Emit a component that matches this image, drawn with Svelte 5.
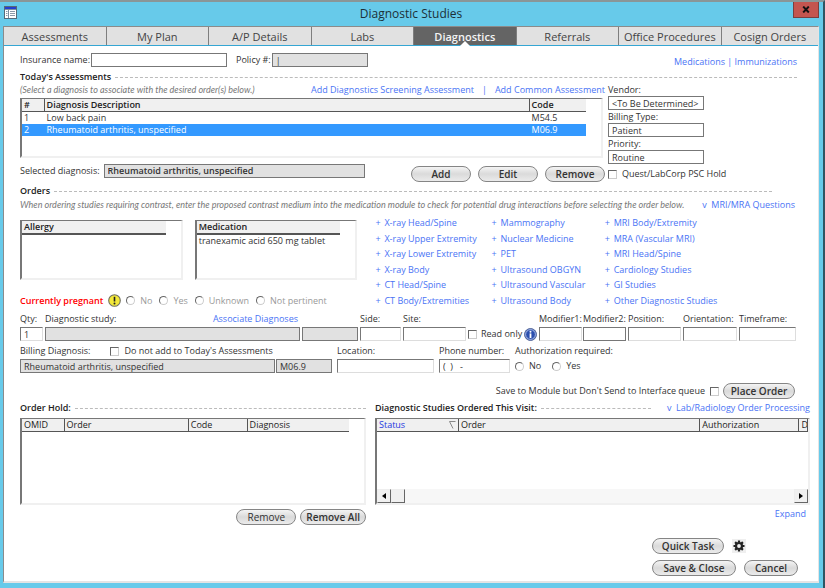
<script>
  const tabs = ['Assessments', 'My Plan', 'A/P Details', 'Labs', 'Diagnostics', 'Referrals', 'Office Procedures', 'Cosign Orders'];
  const diagnoses = [
    { n: 1, text: 'Low back pain', code: 'M54.5' },
    { n: 2, text: 'Rheumatoid arthritis, unspecified', code: 'M06.9' }
  ];
  let selected = $state(2);
  const studies = [
    ['X-ray Head/Spine', 'Mammography', 'MRI Body/Extremity'],
    ['X-ray Upper Extremity', 'Nuclear Medicine', 'MRA (Vascular MRI)'],
    ['X-ray Lower Extremity', 'PET', 'MRI Head/Spine'],
    ['X-ray Body', 'Ultrasound OBGYN', 'Cardiology Studies'],
    ['CT Head/Spine', 'Ultrasound Vascular', 'GI Studies'],
    ['CT Body/Extremities', 'Ultrasound Body', 'Other Diagnostic Studies']
  ];
</script>

<div class="screen">
  <div class="window">
    <header class="titlebar">
      <svg class="app-icon" width="13" height="13" viewBox="0 0 13 13" aria-hidden="true">
        <rect x="0.5" y="0.5" width="12" height="12" fill="#fff" stroke="#566a78" />
        <rect x="1" y="1" width="11" height="2" fill="#2340d0" />
        <path d="M1 3.5h11M4.500 3v9" stroke="#7b8ea0" />
        <path d="M2 5.500h1.500M2 7.500h1.500M2 9.500h1.500M6 5.500h5M6 7.500h5M6 9.500h5" stroke="#8b99a8" />
      </svg>
      <h1>Diagnostic Studies</h1>
      <button class="close" aria-label="Close">
        <svg width="8" height="7" viewBox="0 0 8 7" aria-hidden="true"><path d="M1.200 0.500l5.600 6M6.800 0.500l-5.600 6" stroke="#111" stroke-width="1.900" /></svg>
      </button>
    </header>

    <div class="frame">
      <nav class="tabs">
        {#each tabs as tab}
          <button class="tab" class:active={tab === 'Diagnostics'}>{tab}</button>
        {/each}
      </nav>

      <main>
        <div class="insurance">
          <label for="ins">Insurance name:</label>
          <input id="ins" class="box ins" type="text" />
          <label for="policy">Policy #:</label>
          <input id="policy" class="box gray policy" type="text" value="|" />
          <span class="top-links"><a href="#medications">Medications</a> | <a href="#immunizations">Immunizations</a></span>
        </div>

        <h2 class="rule first">Today's Assessments</h2>
        <div class="assess">
          <div class="assess-left">
            <div class="hint-row">
              <em>(Select a diagnosis to associate with the desired order(s) below.)</em>
              <span class="add-links">
                <a href="#screening">Add Diagnostics Screening Assessment</a>
                <span>|</span>
                <a href="#common">Add Common Assessment</a>
              </span>
            </div>
            <div class="sunken short diag">
              <table>
                <colgroup><col style="width:4%" /><col style="width:86%" /><col style="width:10%" /></colgroup>
                <thead><tr><th>#</th><th>Diagnosis Description</th><th>Code</th></tr></thead>
                <tbody>
                  {#each diagnoses as d}
                    <tr class:selected={selected === d.n} onclick={() => (selected = d.n)}>
                      <td>{d.n}</td><td>{d.text}</td><td>{d.code}</td>
                    </tr>
                  {/each}
                </tbody>
              </table>
            </div>
            <div class="selected-row">
              <div class="selected-field">
                <label for="seldx">Selected diagnosis:</label>
                <input id="seldx" class="box gray strong" type="text" readonly value="Rheumatoid arthritis, unspecified" />
              </div>
              <div class="pills">
                <button class="pill">Add</button>
                <button class="pill">Edit</button>
                <button class="pill">Remove</button>
              </div>
            </div>
          </div>
          <div class="assess-right">
            <div class="stack"><label for="vendor">Vendor:</label><input id="vendor" class="box" type="text" value="<To Be Determined>" /></div>
            <div class="stack"><label for="billtype">Billing Type:</label><input id="billtype" class="box" type="text" value="Patient" /></div>
            <div class="stack"><label for="priority">Priority:</label><input id="priority" class="box" type="text" value="Routine" /></div>
            <label class="tick psc"><input type="checkbox" />Quest/LabCorp PSC Hold</label>
          </div>
        </div>

        <h2 class="rule second">Orders</h2>
        <div class="contrast">
          <em>When ordering studies requiring contrast, enter the proposed contrast medium into the medication module to check for potential drug interactions before selecting the order below.</em>
          <a href="#mri"><span class="mark">v</span>MRI/MRA Questions</a>
        </div>

        <div class="orders">
          <div class="orders-left">
            <div class="lists">
              <div class="sunken short plain">
                <table><thead><tr><th>Allergy</th></tr></thead></table>
              </div>
              <div class="sunken short plain">
                <table>
                  <thead><tr><th>Medication</th></tr></thead>
                  <tbody><tr><td>tranexamic acid 650 mg tablet</td></tr></tbody>
                </table>
              </div>
            </div>
            <div class="pregnant" role="radiogroup" aria-label="Currently pregnant">
              <strong>Currently pregnant</strong>
              <svg width="13" height="13" viewBox="0 0 13 13" aria-hidden="true">
                <circle cx="6.500" cy="6.500" r="5.800" fill="#f3e93a" stroke="#6f6f62" stroke-width="1.100" />
                <path d="M6.500 2.800v4.700" stroke="#222" stroke-width="1.600" /><circle cx="6.500" cy="9.600" r="1" fill="#222" />
              </svg>
              <label><input type="radio" name="preg" disabled />No</label>
              <label><input type="radio" name="preg" disabled />Yes</label>
              <label><input type="radio" name="preg" disabled />Unknown</label>
              <label><input type="radio" name="preg" disabled />Not pertinent</label>
            </div>
          </div>
          <div class="studies">
            {#each studies as row}
              {#each row as study}
                <a href="#study"><span class="mark">+</span>{study}</a>
              {/each}
            {/each}
          </div>
        </div>

        <div class="fields">
          <div class="field"><label for="qty">Qty:</label><input id="qty" class="inset" type="text" value="1" /></div>
          <div class="field">
            <span class="split"><label for="study">Diagnostic study:</label><a href="#associate">Associate Diagnoses</a></span>
            <input id="study" class="box gray" type="text" readonly />
          </div>
          <div class="field"><input class="box gray" type="text" aria-label="Study code" readonly /></div>
          <div class="field"><label for="side">Side:</label><input id="side" class="inset" type="text" /></div>
          <div class="field"><label for="site">Site:</label><input id="site" class="inset" type="text" /></div>
          <div class="readonly">
            <label class="tick"><input type="checkbox" />Read only</label>
            <svg width="13" height="13" viewBox="0 0 13 13" aria-hidden="true">
              <circle cx="6.500" cy="6.500" r="6" fill="#2b4fae" stroke="#5a6c9c" />
              <circle cx="6.500" cy="6.500" r="4.900" fill="none" stroke="#c8d6f5" stroke-width="0.800" />
              <circle cx="6.500" cy="3.700" r="1" fill="#fff" /><path d="M6.500 5.400v4.600" stroke="#fff" stroke-width="1.800" />
            </svg>
          </div>
          <div class="field"><label for="mod1">Modifier1:</label><input id="mod1" class="inset" type="text" /></div>
          <div class="field"><label for="mod2">Modifier2:</label><input id="mod2" class="box" type="text" /></div>
          <div class="field"><label for="pos">Position:</label><input id="pos" class="inset" type="text" /></div>
          <div class="field"><label for="orient">Orientation:</label><input id="orient" class="inset" type="text" /></div>
          <div class="field"><label for="time">Timeframe:</label><input id="time" class="inset" type="text" /></div>
        </div>

        <div class="billing">
          <div class="field">
            <span class="bill-label">
              <label for="billdx">Billing Diagnosis:</label>
              <label class="tick"><input type="checkbox" />Do not add to Today's Assessments</label>
            </span>
            <span class="bill-inputs">
              <input id="billdx" class="box gray" type="text" readonly value="Rheumatoid arthritis, unspecified" />
              <input class="box gray" type="text" aria-label="Billing code" readonly value="M06.9" />
            </span>
          </div>
          <div class="field"><label for="loc">Location:</label><input id="loc" class="inset" type="text" /></div>
          <div class="field"><label for="phone">Phone number:</label><input id="phone" class="inset" type="text" value="(  )   -" /></div>
          <div class="field" role="radiogroup" aria-label="Authorization required">
            <span>Authorization required:</span>
            <span class="auth">
              <label><input type="radio" name="auth" />No</label>
              <label><input type="radio" name="auth" />Yes</label>
            </span>
          </div>
        </div>

        <div class="place">
          <label class="tick">Save to Module but Don't Send to Interface queue<input type="checkbox" /></label>
          <button class="pill">Place Order</button>
        </div>

        <div class="bottom">
          <section>
            <h2 class="rule">Order Hold:</h2>
            <div class="sunken short grid-table">
              <table>
                <colgroup><col style="width:13%" /><col style="width:38%" /><col style="width:18%" /><col style="width:31%" /></colgroup>
                <thead><tr><th>OMID</th><th>Order</th><th>Code</th><th>Diagnosis</th></tr></thead>
              </table>
            </div>
            <div class="hold-actions">
              <button class="pill soft">Remove</button>
              <button class="pill">Remove All</button>
            </div>
          </section>
          <section>
            <div class="visit-head">
              <h2 class="rule">Diagnostic Studies Ordered This Visit:</h2>
              <a href="#processing"><span class="mark">v</span>Lab/Radiology Order Processing</a>
            </div>
            <div class="sunken grid-table scrolls">
              <table>
                <colgroup><col style="width:19%" /><col style="width:56%" /><col style="width:23%" /><col style="width:2%" /></colgroup>
                <thead>
                  <tr>
                    <th><span class="sort">Status<svg width="7" height="8" viewBox="0 0 7 8" aria-hidden="true"><path d="M6.500 0.500h-6l3.500 7" fill="none" stroke="#888" /></svg></span></th>
                    <th>Order</th><th>Authorization</th><th>D</th>
                  </tr>
                </thead>
              </table>
              <div class="scrollbar">
                <button aria-label="Scroll left"><svg width="4" height="6" viewBox="0 0 4 6"><path d="M4 0v6L0 3z" /></svg></button>
                <span class="thumb"></span>
                <button class="right" aria-label="Scroll right"><svg width="4" height="6" viewBox="0 0 4 6"><path d="M0 0v6L4 3z" /></svg></button>
              </div>
            </div>
            <div class="expand"><a href="#expand">Expand</a></div>
          </section>
        </div>

        <div class="footer">
          <div>
            <button class="pill wide">Quick Task</button>
            <button class="gear" aria-label="Settings">
              <svg width="12" height="12" viewBox="-6 -6 12 12" aria-hidden="true">
                <circle r="3" fill="none" stroke="#222" stroke-width="2.200" />
                <g stroke="#222" stroke-width="2.200">
                  <path d="M0 -3.500v-2M0 3.500v2M-3.500 0h-2M3.500 0h2" />
                  <path d="M2.500 -2.500l1.400 -1.400M-2.500 2.500l-1.400 1.400M-2.500 -2.500l-1.400 -1.400M2.500 2.500l1.400 1.400" />
                </g>
              </svg>
            </button>
          </div>
          <div>
            <button class="pill save">Save &amp; Close</button>
            <button class="pill cancel">Cancel</button>
          </div>
        </div>
      </main>
    </div>
  </div>
</div>

<style>
  :global(body) { margin: 0; background: #67caea; }
  * { box-sizing: border-box; }
  .screen {
    font: 9px/12px "Open Sans", "Noto Sans", sans-serif;
    color: #333;
    border-top: 2px solid #8a9698;
    border-right: 2px solid #2f5563;
    background: #67caea;
    min-height: 100vh;
  }
  button, input { font: inherit; color: inherit; margin: 0; padding: 0; }
  a { color: #4a74f5; text-decoration: none; white-space: nowrap; }
  label, span { white-space: nowrap; }
  .window { padding: 0 4px 5px 3px; }

  .titlebar { display: grid; grid-template-columns: 1fr auto 1fr; height: 24px; }
  .app-icon { margin: 4px 0 0 1px; }
  h1 { margin: 0; font-size: 12px; line-height: 23px; font-weight: 400; color: #1c3038; }
  .close {
    justify-self: end; width: 26px; height: 16px;
    border: 1px solid #7a3f3f; border-top: 0; background: #c4554f;
    display: flex; align-items: center; justify-content: center;
  }

  .frame { background: #fff; border: 1px solid #8b8b8b; border-right-color: #e4e4e4; border-bottom: 2px solid #e4e4e4; }
  .tabs { display: flex; border-bottom: 1px solid #35a6d3; }
  .tab {
    flex: 1 1 0; min-width: 0; height: 18px; border: 0; border-right: 1px solid #7e7e7e;
    background: #e1e1e1; font-size: 11px; line-height: 17px; color: #444; position: relative; white-space: nowrap;
  }
  .tab:last-child { border-right: 0; flex-grow: 0.95; }
  .tab.active { background: #646464; color: #f4f4f4; font-weight: 600; }
  .tab.active::after {
    content: ""; position: absolute; left: 50%; bottom: -1px; margin-left: -5px;
    border: 5px solid transparent; border-top: 0; border-bottom-color: #fff;
  }

  main { padding: 7px 8px 5px 16px; }
  .box, .inset { height: 14px; width: 100%; min-width: 0; padding: 0 3px; background: #fff; border: 1px solid #777; border-radius: 0; outline: 0; }
  .inset { border-color: #777 #ddd #ddd #777; }
  .gray { background: #e1e1e1; }
  .strong { font-weight: 600; }

  .insurance { display: flex; align-items: center; }
  .ins { width: 136px; margin: 0 9px 0 1px; }
  .policy { width: 96px; margin-left: 1px; }
  .top-links { margin: 4px 13px 0 auto; color: #4a74f5; line-height: 10px; }

  h2 { margin: 0; font-size: 9px; line-height: 12px; font-weight: 600; color: #222; }
  .rule { display: flex; align-items: center; gap: 4px; white-space: nowrap; }
  .rule::after { content: ""; flex: 1; border-top: 1px dashed #bbb; }
  .first { margin: 4px 13px 1px 0; }
  .second { margin: 3px 38px 2px 0; }
  em { color: #777; font-family: Lato, "Open Sans", sans-serif; white-space: nowrap; }

  .assess { display: grid; grid-template-columns: minmax(0, 585fr) minmax(0, 202fr); gap: 3px; }
  .hint-row { display: flex; justify-content: space-between; margin-bottom: 2px; }
  .add-links { display: flex; gap: 8px; color: #4a74f5; }

  .sunken { border: 2px solid #f0f0f0; border-top: 1px solid #777; border-left-color: #777; background: #fff; overflow: hidden; }
  table { border-collapse: separate; border-spacing: 0; width: 100%; table-layout: fixed; }
  .short table { width: calc(100% - 15px); }
  th, td { padding: 0 2px; height: 12px; line-height: 12px; text-align: left; font-weight: 400; white-space: nowrap; overflow: hidden; }
  th { background: #f0f0f0; color: #222; border-bottom: 1px solid #555; border-right: 1px solid #555; font-weight: 600; }
  .short th:last-child { border-right: 0; }
  .diag { height: 60px; margin-right: 2px; }
  .selected td { background: #3399ff; color: #fff; }

  .selected-row { display: flex; justify-content: space-between; margin-top: 5px; height: 19px; }
  .selected-field { display: flex; align-items: center; gap: 4px; height: 15px; flex: 0 0 59%; }
  .selected-field .box { flex: 1; }
  .pills { display: flex; gap: 7px; align-items: end; }
  .pill {
    height: 16px; min-width: 60px; padding: 0 6px; border: 1px solid #858585; border-radius: 8px;
    background: linear-gradient(#f4f4f4, #dadada 50%, #ebebeb); font-size: 10px; line-height: 13px; font-weight: 600; color: #333; white-space: nowrap;
  }
  .soft { font-weight: 400; }
  .stack { width: 96px; margin-bottom: 1px; display: grid; }

  .tick { display: inline-flex; align-items: center; gap: 5px; }
  input[type="checkbox"] { appearance: none; width: 9px; height: 9px; border: 1px solid #ccc; border-top-color: #666; border-left-color: #666; background: #fff; }
  input[type="radio"] { appearance: none; width: 9px; height: 9px; border-radius: 50%; border: 1px solid #ccc; border-top-color: #666; border-left-color: #666; background: #fff; }
  .psc { margin-top: 3px; }

  .contrast { display: flex; justify-content: space-between; margin-right: 15px; margin-bottom: 6px; }
  .mark { display: inline-block; width: 9px; }
  .orders { display: grid; grid-template-columns: minmax(0, 337fr) minmax(0, 434fr); gap: 18px; }
  .lists { display: grid; grid-template-columns: 1fr 1fr; gap: 12px; padding-top: 3px; }
  .plain { height: 60px; }
  .plain th { height: 14px; border-bottom-width: 2px; }
  .pregnant { display: flex; align-items: center; gap: 5px; margin-top: 14px; height: 13px; color: #999; }
  .pregnant strong { color: #f00; font-weight: 600; }
  .pregnant label { display: flex; align-items: center; gap: 5px; margin-right: 2px; }
  .auth label { display: flex; align-items: center; gap: 5px; }
  .studies { display: grid; grid-template-columns: 116fr 113fr 205fr; align-content: space-between; }

  .fields { display: grid; grid-template-columns: 23fr 255fr 56fr 41fr 63fr 69fr 42fr 43fr 53fr 54fr 57fr; gap: 2px; margin: 6px 14px 4px 0; align-items: end; }
  .field { display: grid; gap: 2px; min-width: 0; }
  .split { display: flex; justify-content: space-between; padding-right: 2px; }
  .readonly { display: flex; align-items: center; justify-content: space-between; height: 14px; }
  .readonly .tick { gap: 4px; }

  .billing { display: grid; grid-template-columns: 312fr 97fr 71fr 295fr; gap: 5px; }
  .bill-label { display: flex; gap: 20px; }
  .bill-inputs { display: grid; grid-template-columns: 255fr 56fr; gap: 1px; }
  .auth { display: flex; gap: 11px; height: 14px; }

  .place { display: flex; align-items: center; justify-content: flex-end; gap: 4px; margin: 10px 15px 3px 0; }
  .place .pill { min-width: 72px; }

  .bottom { display: grid; grid-template-columns: minmax(0, 346fr) minmax(0, 435fr); gap: 9px; }
  .visit-head { display: grid; grid-template-columns: 1fr auto; gap: 16px; }
  .grid-table { height: 87px; margin-top: 4px; }
  .grid-table th { font-weight: 400; height: 13px; }
  .grid-table th:last-child { padding-right: 0; }
  .hold-actions { display: flex; gap: 4px; justify-content: flex-end; margin-top: 4px; }
  .hold-actions .pill { padding: 0 5px; }
  .scrolls { display: flex; flex-direction: column; }
  .sort { display: flex; align-items: center; justify-content: space-between; color: #2438e0; }
  .scrollbar { display: flex; margin-top: auto; height: 14px; background: #f7f7f7; }
  .scrollbar button, .thumb { width: 14px; height: 14px; border: 1px solid #eee; border-right-color: #666; border-bottom-color: #666; background: #f0f0f0; display: flex; align-items: center; justify-content: center; }
  .scrollbar .right { margin-left: auto; }
  .expand { text-align: right; margin: 3px 4px 0 0; }

  .footer { width: 158px; margin: 13px 0 0 auto; display: grid; gap: 6px; }
  .footer div { display: flex; align-items: center; gap: 8px; }
  .wide { min-width: 72px; }
  .save { min-width: 84px; }
  .cancel { min-width: 54px; }
  .gear { width: 14px; height: 14px; border: 0; background: #efefef; display: flex; align-items: center; justify-content: center; }
</style>
